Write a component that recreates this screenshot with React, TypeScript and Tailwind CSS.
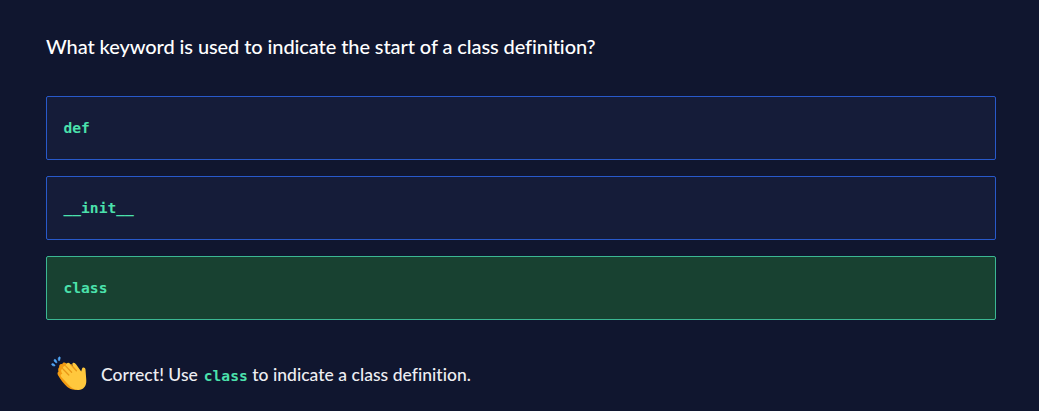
import React from "react";

const options = [
  { label: "def", correct: false },
  { label: "__init__", correct: false },
  { label: "class", correct: true },
];

const codeStyle =
  "font-['DejaVu_Sans_Mono',monospace] text-[14.6px] font-bold text-[#4be1ac]";

function ClappingHands() {
  return (
    <svg className="block h-9 w-9 shrink-0 overflow-visible" viewBox="0 0 36 36" fill="none" aria-hidden="true">
      <path
        d="M5.2 11.2C4.8 9 6.4 7.4 8.2 8.3C8.6 6.4 10.5 6 12 7.3L25 16.5L26 32.2C22 34.7 16.5 33.8 13.3 31C9.6 27.5 6.5 23.5 4.2 19.5C3.2 17.7 3.3 16.1 4.5 15.4C3.9 13.6 4.2 12 5.2 11.2Z"
        fill="#F39B12"
      />
      <path
        d="M12.7 7.6C13.7 6.3 15.2 6.8 16 7.7L19.2 10.9C18.4 8.8 17.8 7.9 18.8 7.1C20 6.1 21.3 7.3 22.2 8.6L27.2 15.5L28 12.7C28.5 10.8 31.4 11.2 31.5 13.6L32.3 24.3C32.7 30.6 28.8 34.5 23.7 34C19.9 33.7 17.3 31.7 15 29.3L7.3 21C6 19.4 7 17.5 8.4 18L7.4 16C6.6 14.2 7.5 12.6 9.2 13.2C8.4 10.9 10 9.6 11.8 10.1C11.7 9 12 8.3 12.7 7.6Z"
        fill="#FFC83D"
      />
      <path
        d="M9.2 13.2L14.8 19M11.8 10.1L17.6 16.2M17 8.8L22.4 14.8"
        stroke="#E99818"
        strokeWidth="1.3"
        strokeLinecap="round"
      />
      <path
        d="M-2 8.1C-1.6 7.2 -0.3 7.4 0.5 8.1L1.5 9.2C1.8 9.8 1.2 10.2 0.6 10.1C-0.7 10 -1.9 9.4 -2 8.1ZM0.6 3.7C1.3 3 2 3.4 2.5 4.1L3.5 6.1C3.7 6.8 3 7.1 2.5 6.7C1.3 6 0.1 4.8 0.6 3.7ZM5.5 1C6.2 0.6 6.8 1.1 6.8 1.9L6.2 4.4C6 5 5.3 4.9 5 4.4C4.5 3.1 4.5 1.7 5.5 1Z"
        transform="translate(-0.5 0)"
        fill="#50A5F5"
        stroke="#50A5F5"
        strokeWidth="0.5"
      />
    </svg>
  );
}

export default function App() {
  return (
    <main className="h-[411px] bg-[#10162f] pl-[46px] pr-[43px] pt-[30px] font-['Lato',sans-serif] font-medium text-white">
      <h1 className="h-8 whitespace-nowrap text-[20px] leading-8 tracking-[-0.09px]">
        What keyword is used to indicate the start of a class definition?
      </h1>
      <div className="mt-[34px] flex flex-col gap-4">
        {options.map(({ label, correct }) => (
          <button
            key={label}
            className={`flex h-16 w-full items-center rounded-[2px] border pl-[16.5px] text-left ${
              correct ? "border-[#3bb793] bg-[#184131]" : "border-[#2859ca] bg-[#151c39]"
            }`}
          >
            <code className={codeStyle}>{label}</code>
          </button>
        ))}
      </div>
      <div className="mt-9 flex items-start pl-2">
        <ClappingHands />
        <p className="ml-[11px] mt-[7px] whitespace-nowrap text-[17.5px] leading-6 tracking-[0.03px] text-[#eeeef2]">
          Correct! Use <code className={`ml-[1.5px] tracking-[0px] ${codeStyle}`}>class</code> to indicate a class definition.
        </p>
      </div>
    </main>
  );
}
